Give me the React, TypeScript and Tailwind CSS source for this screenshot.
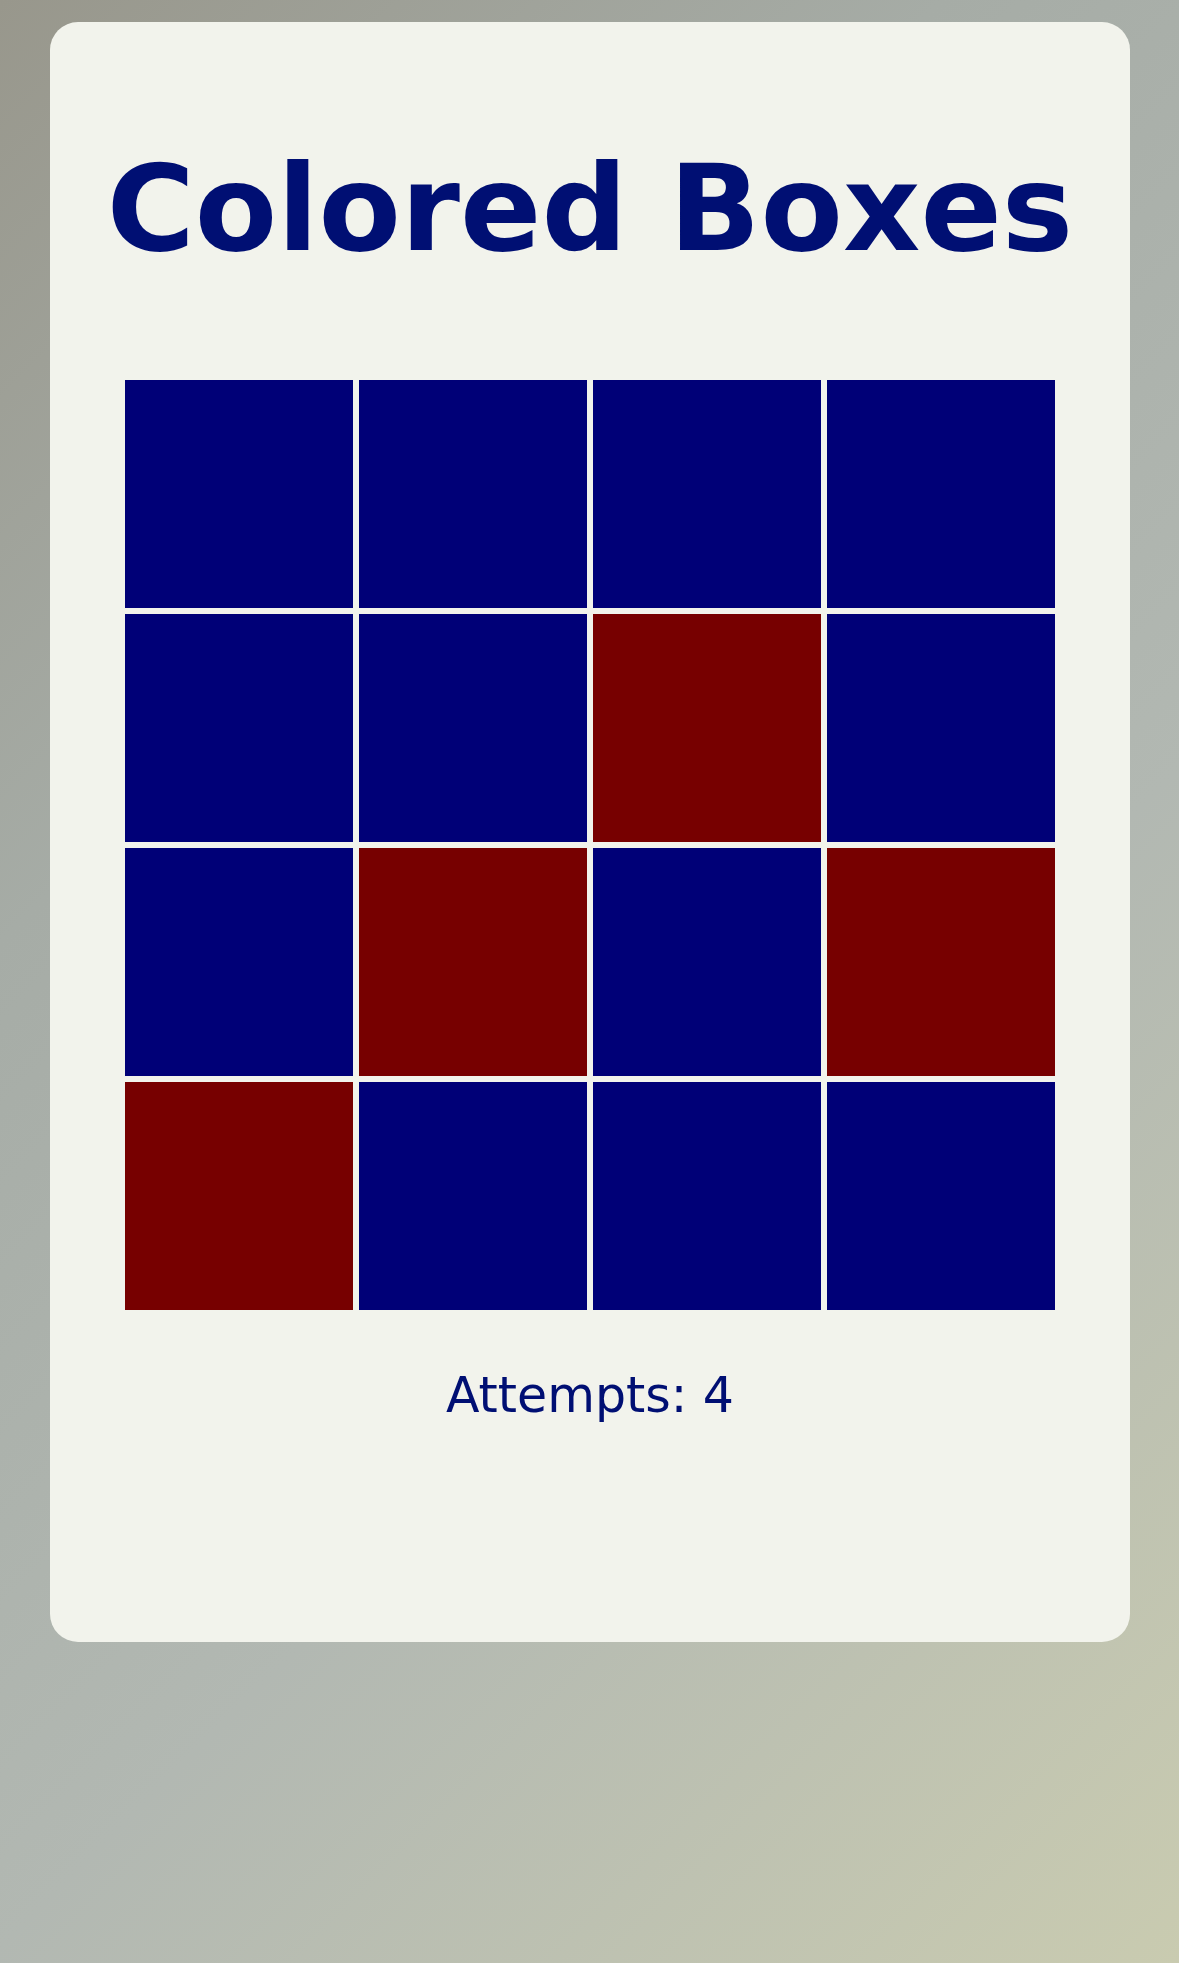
import React from 'react';

// 0 = blue, 1 = red
const grid: number[] = [
  0, 0, 0, 0,
  0, 0, 1, 0,
  0, 1, 0, 1,
  1, 0, 0, 0,
];

export default function App() {
  return (
    <div className="min-h-screen w-full bg-[linear-gradient(135deg,#98978c_0%,#a6aca6_30%,#b2b8b2_62%,#c9cbb0_100%)] pt-[22px] font-['DejaVu_Sans',Verdana,sans-serif]">
      <div className="ml-[50px] w-[1080px] rounded-[28px] bg-[#f2f3ec] pt-[97px] pb-[210px]">
        {/* title */}
        <h1 className="text-center text-[120px] font-bold leading-[180px] text-[#000f73]">
          Colored Boxes
        </h1>

        {/* boxes */}
        <div className="mx-auto mt-[81px] grid w-[930px] grid-cols-4 gap-[6px]">
          {grid.map((c, i) => (
            <div
              key={i}
              className={c === 1 ? 'h-[228px] bg-[#770000]' : 'h-[228px] bg-[#000077]'}
            />
          ))}
        </div>

        <p className="mt-[49px] text-center text-[49px] leading-[73px] text-[#000f73]">
          Attempts: 4
        </p>
      </div>
    </div>
  );
}
